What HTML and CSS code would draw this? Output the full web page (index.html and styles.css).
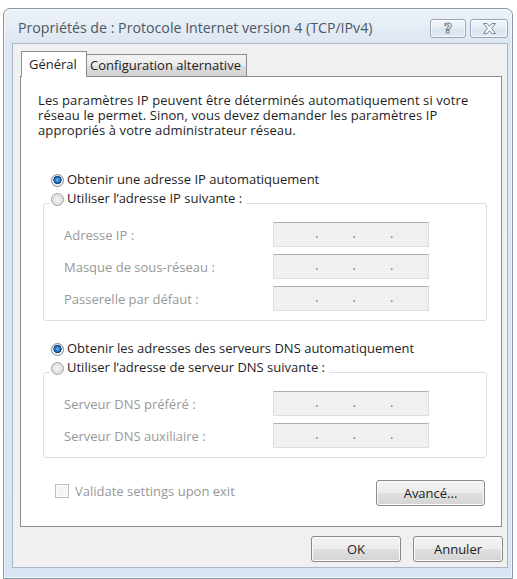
FILE: index.html
```html
<!DOCTYPE html>
<html lang="fr">
<head>
<meta charset="utf-8">
<title>Propriétés de : Protocole Internet version 4 (TCP/IPv4)</title>
<link rel="stylesheet" href="styles.css">
</head>
<body>
<div class="window">
  <div class="titlebar">
    <div class="title">Propriétés de : Protocole Internet version 4 (TCP/IPv4)</div>
    <div class="caption-buttons">
      <div class="cbtn help"><span class="qmark">?</span></div>
      <div class="cbtn close">
        <svg width="15" height="11" viewBox="0 0 15 11"><path d="M1.5 0.5 H5 L7.5 3.3 L10 0.5 H13.5 L9.6 5.5 L13.5 10.5 H10 L7.5 7.7 L5 10.5 H1.5 L5.4 5.5 Z" fill="#fbfbfb" stroke="#74849a" stroke-width="1" stroke-linejoin="round"/></svg>
      </div>
    </div>
  </div>
  <div class="client">
    <div class="tabs">
      <div class="tab active">Général</div>
      <div class="tab">Configuration alternative</div>
    </div>
    <div class="panel">
      <p class="intro">Les paramètres IP peuvent être déterminés automatiquement si votre<br>réseau le permet. Sinon, vous devez demander les paramètres IP<br>appropriés à votre administrateur réseau.</p>

      <div class="option first"><span class="radio checked"></span><span class="opt-text">Obtenir une adresse IP automatiquement</span></div>
      <div class="option legend"><span class="radio"></span><span class="opt-text">Utiliser l’adresse IP suivante :</span></div>
      <div class="group">
        <div class="field"><span class="label">Adresse IP :</span><span class="ipbox"><i>.</i><i>.</i><i>.</i></span></div>
        <div class="field"><span class="label">Masque de sous-réseau :</span><span class="ipbox"><i>.</i><i>.</i><i>.</i></span></div>
        <div class="field"><span class="label">Passerelle par défaut :</span><span class="ipbox"><i>.</i><i>.</i><i>.</i></span></div>
      </div>

      <div class="option second"><span class="radio checked"></span><span class="opt-text">Obtenir les adresses des serveurs DNS automatiquement</span></div>
      <div class="option legend legend-dns"><span class="radio"></span><span class="opt-text">Utiliser l’adresse de serveur DNS suivante :</span></div>
      <div class="group group-dns">
        <div class="field"><span class="label">Serveur DNS préféré :</span><span class="ipbox"><i>.</i><i>.</i><i>.</i></span></div>
        <div class="field"><span class="label">Serveur DNS auxiliaire :</span><span class="ipbox"><i>.</i><i>.</i><i>.</i></span></div>
      </div>

      <div class="bottom-row">
        <div class="check"><span class="checkbox"></span><span class="check-text">Validate settings upon exit</span></div>
        <div class="button advanced">Avancé...</div>
      </div>
    </div>
    <div class="footer">
      <div class="button">OK</div>
      <div class="button">Annuler</div>
    </div>
  </div>
</div>
</body>
</html>
```

FILE: styles.css
```css
* {
  box-sizing: border-box;
}

html,
body {
  margin: 0;
  padding: 0;
  background: #ffffff;
}

body {
  font-family: "Open Sans", "Noto Sans", "Liberation Sans", sans-serif;
  font-size: 13px;
  color: #1e1e1e;
}

.window {
  margin: 8px 0 0 3px;
  width: 510px;
  height: 571px;
  border: 1px solid #8796a8;
  border-radius: 7px 7px 0 0;
  background: linear-gradient(#edf2f8 0, #dde7f2 34px, #d9e5f2 100%);
  box-shadow: inset 0 0 0 1px rgba(255, 255, 255, 0.55);
  display: flex;
  flex-direction: column;
}

.titlebar {
  height: 34px;
  display: flex;
  justify-content: space-between;
  align-items: flex-start;
  padding-left: 14px;
  padding-right: 4px;
}

.title {
  margin-top: 10px;
  font-size: 14.2px;
  line-height: 18px;
  color: #4d5864;
}

.caption-buttons {
  display: flex;
  gap: 4px;
  margin-top: 10px;
}

.cbtn {
  height: 19px;
  border: 1px solid #97a6b8;
  border-radius: 3px;
  background: linear-gradient(#f4f7fb, #e3ebf4 50%, #d9e3ee 51%, #e2eaf3);
  box-shadow: inset 0 0 0 1px rgba(255, 255, 255, 0.7);
  display: flex;
  align-items: center;
  justify-content: center;
}

.help {
  width: 36px;
}

.close {
  width: 38px;
}

.qmark {
  font-family: "DejaVu Sans", sans-serif;
  font-weight: bold;
  font-size: 14px;
  line-height: 15px;
  color: #fbfbfb;
  -webkit-text-stroke: 1px #74849a;
}

.client {
  margin-left: 8px;
  width: 496px;
  height: 525px;
  border: 1px solid #aab7c6;
  background: #f0f0f0;
  padding: 7px 0 0 7px;
}

.tabs {
  display: flex;
  align-items: flex-end;
  height: 25px;
  margin-left: 1px;
}

.tab {
  height: 22px;
  line-height: 21px;
  padding-left: 3px;
  width: 160px;
  border: 1px solid #898c95;
  border-left: none;
  border-bottom: none;
  background: linear-gradient(#f3f3f3, #ebebeb 50%, #dddddd 51%, #d2d2d2);
  color: #1e1e1e;
}

.tab.active {
  position: relative;
  z-index: 1;
  height: 26px;
  width: 66px;
  margin-bottom: -1px;
  line-height: 24px;
  padding-left: 7px;
  border-left: 1px solid #898c95;
  background: #ffffff;
}

.panel {
  width: 482px;
  height: 451px;
  border: 1px solid #898c95;
  background: #ffffff;
}

.intro {
  margin: 16px 0 32px 17px;
  line-height: 15px;
  letter-spacing: 0.1px;
}

.option {
  display: flex;
  align-items: flex-start;
  height: 19px;
  padding-left: 30px;
}

.opt-text {
  line-height: 19px;
  margin-left: 3px;
}

.radio {
  flex: none;
  width: 13px;
  height: 13px;
  margin-top: 4px;
  border-radius: 50%;
  border: 1px solid #9a9a9a;
  background: radial-gradient(circle, #f6f6f6 0, #e9e9e9 3px, #dadada 4.5px, #f4f4f4 5.5px);
}

.radio.checked {
  border-color: #7d8791;
  background: radial-gradient(circle at 50% 45%, #8cc6f2 0, #3b8ad3 1.6px, #12579c 3.4px, #0b3f78 3.9px, #e3e3e3 4.3px, #f6f6f6 5.5px);
}

.legend {
  position: relative;
  width: fit-content;
  margin-left: 29px;
  padding-left: 1px;
  padding-right: 4px;
  margin-bottom: -5px;
  background: #ffffff;
}

.group {
  margin-left: 22px;
  width: 444px;
  border: 1px solid #d5dfe5;
  border-radius: 3px;
  padding: 18px 0 9px 20px;
  display: flex;
  flex-direction: column;
  gap: 7px;
}

.field {
  display: grid;
  grid-template-columns: 209px 156px;
  align-items: center;
  height: 25px;
}

.label {
  color: #989898;
}

.ipbox {
  height: 25px;
  display: flex;
  padding-left: 41px;
  background: #f0f0f0;
  border: 1px solid #dadee4;
  border-top-color: #adafb5;
  line-height: 21px;
  color: #777777;
}

.ipbox i {
  font-style: normal;
  width: 37.5px;
}

.second {
  margin-top: 18px;
}

.legend-dns {
  margin-bottom: -5px;
}

.group-dns {
  padding-bottom: 9px;
}

.bottom-row {
  margin-top: 22px;
  display: flex;
  justify-content: space-between;
  align-items: flex-start;
  padding-left: 34px;
  padding-right: 16px;
}

.check {
  display: flex;
  align-items: center;
  margin-top: 3px;
}

.checkbox {
  width: 14px;
  height: 14px;
  border: 1px solid #bdbdbd;
  background: #f5f5f5;
  box-shadow: inset 0 0 0 1px #fbfbfb;
}

.check-text {
  margin-left: 6px;
  line-height: 16px;
  color: #989898;
}

.button {
  height: 26px;
  border: 1px solid #8a8a8a;
  border-radius: 3px;
  background: linear-gradient(#f4f4f4, #ececec 50%, #e0e0e0 51%, #d4d4d4);
  box-shadow: inset 0 0 0 1px #fbfbfb;
  display: flex;
  align-items: center;
  justify-content: center;
  color: #1e1e1e;
  width: 90px;
}

.advanced {
  width: 109px;
}

.footer {
  display: flex;
  justify-content: flex-end;
  gap: 12px;
  margin-top: 9px;
  padding-right: 4px;
}
```
